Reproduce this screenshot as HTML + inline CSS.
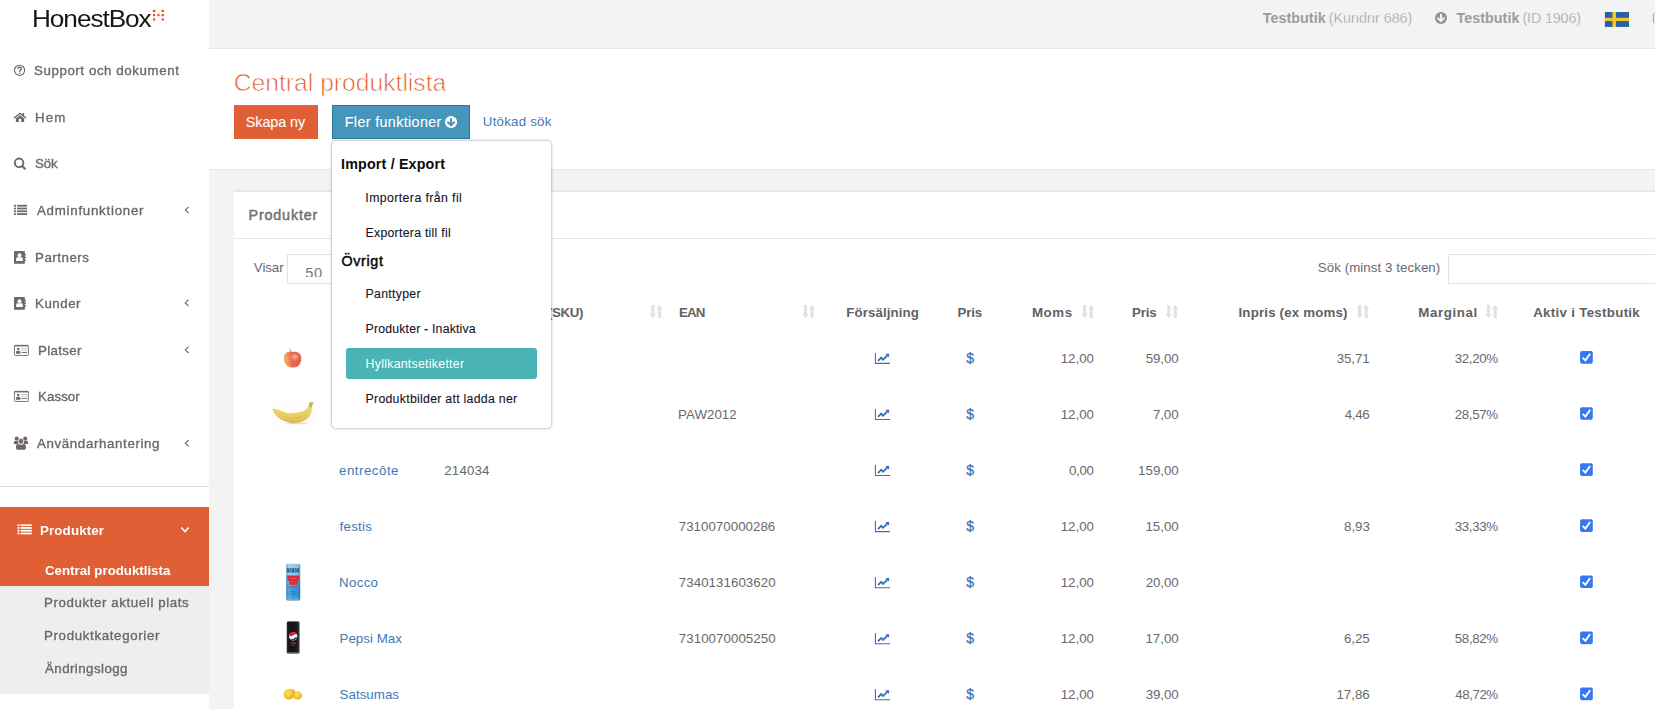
<!DOCTYPE html>
<html lang="sv"><head><meta charset="utf-8"><title>Central produktlista</title>
<style>
html,body{margin:0;padding:0}
body{width:1655px;height:709px;overflow:hidden;position:relative;background:#f3f3f4;font-family:"Liberation Sans",sans-serif;}
.t{position:absolute;z-index:2;white-space:nowrap;line-height:1;font-family:"Liberation Sans",sans-serif;}
.a{position:absolute;display:block}
svg{position:absolute;overflow:visible}

</style></head>
<body>
<!-- sidebar -->
<div class="a" style="left:0;top:0;width:209px;height:709px;background:#fff"></div>
<div class="a" style="left:0;top:486px;width:209px;height:1px;background:#dddddd"></div>
<div class="a" style="left:0;top:507px;width:209px;height:79px;background:#e05f35"></div>
<div class="a" style="left:0;top:586px;width:209px;height:108px;background:#eeeeee"></div>
<!-- navbar -->
<div class="a" style="left:209px;top:48px;width:1446px;height:1px;background:#e4e8eb"></div>
<!-- page heading -->
<div class="a" style="left:209px;top:49px;width:1446px;height:120px;background:#fff;border-bottom:1px solid #e4e8eb"></div>
<!-- ibox -->
<div class="a" style="left:234px;top:190px;width:1421px;height:519px;background:#fff;border-top:2px solid #e4e8eb;box-sizing:border-box"></div>
<div class="a" style="left:234px;top:238px;width:1421px;height:1px;background:#e4e8eb"></div>
<!-- buttons -->
<div class="a" style="left:234px;top:105px;width:84px;height:34px;background:#e05f35"></div>
<div class="a" style="left:332px;top:105px;width:138px;height:34px;background:#4496ba;border:1px solid #2f7799;box-sizing:border-box"></div>
<!-- select + search input -->
<div class="a" style="left:287px;top:254px;width:90px;height:30px;background:#fff;border:1px solid #e3e4e5;box-sizing:border-box"><div style="position:absolute;left:0;top:0;width:80px;height:22.3px;overflow:hidden"><span style="position:absolute;left:17.3px;top:10.5px;font-size:14.6px;line-height:1;color:#74777a;letter-spacing:.55px">50</span></div></div>
<div class="a" style="left:1448px;top:254px;width:260px;height:30px;background:#fff;border:1px solid #e3e4e5;box-sizing:border-box"></div>
<!-- dropdown -->
<div class="a" style="z-index:1;left:332px;top:140.8px;width:218.5px;height:286.8px;background:#fff;border-radius:4px;box-shadow:0 0 3px rgba(86,96,117,.7)"></div>
<div class="a" style="z-index:1;left:346px;top:348px;width:191px;height:31px;background:#49b3b6;border-radius:3px"></div>
<svg width="1655" height="709" viewBox="0 0 1655 709" style="left:0;top:0">
<defs>
<radialGradient id="ap" cx="0.62" cy="0.32" r="0.75"><stop offset="0" stop-color="#f6b9aa"/><stop offset="0.35" stop-color="#e8604f"/><stop offset="0.75" stop-color="#e4614a"/><stop offset="1" stop-color="#ef9f60"/></radialGradient>
<linearGradient id="ap2" x1="0" x2="1" y1="0" y2="0"><stop offset="0" stop-color="#f3b25a" stop-opacity=".95"/><stop offset="0.35" stop-color="#f0a050" stop-opacity=".35"/><stop offset="0.6" stop-color="#e8553f" stop-opacity="0"/></linearGradient>
<linearGradient id="bn" x1="0" x2="0" y1="0" y2="1"><stop offset="0" stop-color="#f3e08c"/><stop offset="0.5" stop-color="#ecd16a"/><stop offset="0.85" stop-color="#e3c455"/><stop offset="1" stop-color="#cdb046"/></linearGradient>
<linearGradient id="bs" x1="0" x2="0" y1="0" y2="1"><stop offset="0" stop-color="#cfc191"/><stop offset="0.45" stop-color="#a9b343"/><stop offset="1" stop-color="#d3c653"/></linearGradient>
<linearGradient id="nc" x1="0" x2="0" y1="0" y2="1"><stop offset="0" stop-color="#8fcff0"/><stop offset="0.3" stop-color="#86c9ee"/><stop offset="0.5" stop-color="#4aa4de"/><stop offset="0.8" stop-color="#2f8fd6"/><stop offset="1" stop-color="#4fa8df"/></linearGradient>
<linearGradient id="ncs" x1="0" x2="1" y1="0" y2="0"><stop offset="0" stop-color="#0d3f78" stop-opacity=".35"/><stop offset="0.2" stop-color="#fff" stop-opacity=".15"/><stop offset="0.5" stop-color="#fff" stop-opacity="0"/><stop offset="0.85" stop-color="#0d3f78" stop-opacity=".1"/><stop offset="1" stop-color="#0d3f78" stop-opacity=".4"/></linearGradient>
<linearGradient id="pp" x1="0" x2="1" y1="0" y2="0"><stop offset="0" stop-color="#3a3a3c"/><stop offset="0.18" stop-color="#141416"/><stop offset="0.8" stop-color="#1a1a1c"/><stop offset="1" stop-color="#4a4a4d"/></linearGradient>
<radialGradient id="st" cx="0.4" cy="0.35" r="0.7"><stop offset="0" stop-color="#fbe05a"/><stop offset="0.6" stop-color="#f3c934"/><stop offset="1" stop-color="#dba520"/></radialGradient>
<filter id="b1" x="-20%" y="-20%" width="140%" height="140%"><feGaussianBlur stdDeviation="0.35"/></filter>
<filter id="b2" x="-20%" y="-20%" width="140%" height="140%"><feGaussianBlur stdDeviation="0.6"/></filter>
</defs>
<g filter="url(#b1)"><path d="M292.3 352.3 C289 350.8 284.3 352.6 284.2 358 C284.1 363.2 287.6 367.4 291 367.5 C292.3 367.5 293.2 367.5 294.6 367.5 C298 367.4 301.3 363.6 301.3 358.2 C301.3 353 296.6 350.8 292.3 352.3 Z" fill="url(#ap)"/><path d="M292.3 352.3 C289 350.8 284.3 352.6 284.2 358 C284.1 363.2 287.6 367.4 291 367.5 C292.3 367.5 293.2 367.5 294.6 367.5 C298 367.4 301.3 363.6 301.3 358.2 C301.3 353 296.6 350.8 292.3 352.3 Z" fill="url(#ap2)"/><path d="M287.2 354.5 L287.6 363.5" stroke="#f7cf7a" stroke-width="0.7" opacity="0.55"/><path d="M289.6 353.5 L290.2 366" stroke="#f7cf7a" stroke-width="0.7" opacity="0.35"/><path d="M286 356 L286 362" stroke="#f7cf7a" stroke-width="0.7" opacity="0.5"/><path d="M292.5 355 L293 366.5" stroke="#f7cf7a" stroke-width="0.7" opacity="0.25"/><path d="M295.4 358 L295.4 366" stroke="#f7cf7a" stroke-width="0.7" opacity="0.25"/><path d="M288.5 360 L289 366" stroke="#f7cf7a" stroke-width="0.7" opacity="0.4"/><path d="M291.6 352.3 Q291.2 350.3 289.5 349.2" fill="none" stroke="#8a5c38" stroke-width="0.8"/></g>
<rect x="270.2" y="398" width="45.6" height="32.4" fill="#fdfdfc"/><ellipse cx="297" cy="423.4" rx="11" ry="0.9" fill="#d9d3bd" opacity=".7" filter="url(#b2)"/><g filter="url(#b1)"><path d="M309.5 402.2 L313.7 402.3 Q312.2 404.3 311.8 407.2 Q312.6 413.5 307.8 418.6 Q301.5 423.4 292.8 423.2 Q283 422 276.7 416.5 Q273.6 413.4 273 410.6 Q273.6 408.6 276.7 409 Q282 411.6 287.4 413 Q295 414 303.5 411.1 Q307.6 408.8 308.6 406.6 Q309.4 404.5 309.5 402.2 Z" fill="url(#bn)"/><path d="M309.5 402.2 L313.7 402.3 Q312.2 404.3 311.8 407.4 Q310.4 407.6 308.4 406.9 Q309.4 404.5 309.5 402.2 Z" fill="url(#bs)"/><path d="M275 411.8 Q283 417.5 293.5 418 Q303 417.8 309 411.5" fill="none" stroke="#d9bd52" stroke-width="0.8" opacity=".7"/><path d="M273.1 410 Q273.2 409.2 274.2 409" stroke="#6d7a33" stroke-width="0.9" fill="none"/></g>
<g filter="url(#b1)"><rect x="286.3" y="563.9" width="13.9" height="36.5" rx="1.4" fill="url(#nc)"/><rect x="286.3" y="563.9" width="13.9" height="36.5" rx="1.4" fill="url(#ncs)"/><rect x="286.8" y="563.7" width="12.9" height="0.9" rx="0.4" fill="#b9c1c8"/><rect x="287" y="599.6" width="12.5" height="0.9" rx="0.4" fill="#9aa6b3"/><rect x="286.90" y="568.3" width="2.0" height="4.2" rx="0.5" fill="#1a4a86"/><rect x="287.60" y="569.4" width="0.6" height="2" fill="#7cc3ec"/><rect x="289.45" y="568.3" width="2.0" height="4.2" rx="0.5" fill="#1a4a86"/><rect x="290.15" y="569.4" width="0.6" height="2" fill="#7cc3ec"/><rect x="292.00" y="568.3" width="2.0" height="4.2" rx="0.5" fill="#1a4a86"/><rect x="292.70" y="569.4" width="0.6" height="2" fill="#7cc3ec"/><rect x="294.55" y="568.3" width="2.0" height="4.2" rx="0.5" fill="#1a4a86"/><rect x="295.25" y="569.4" width="0.6" height="2" fill="#7cc3ec"/><rect x="297.10" y="568.3" width="2.0" height="4.2" rx="0.5" fill="#1a4a86"/><rect x="297.80" y="569.4" width="0.6" height="2" fill="#7cc3ec"/><path d="M287.3 575.6 H299.4 V580.4 H298.2 L297.6 584.8 H289.6 L289 580.4 H287.3 Z" fill="#d92a35"/><rect x="289.5" y="578.3" width="8" height="0.6" fill="#f08c8c" opacity=".7"/><rect x="290.5" y="581.6" width="6" height="0.6" fill="#f08c8c" opacity=".6"/><rect x="288.2" y="586.6" width="10" height="0.8" fill="#d8232f" opacity=".9"/><rect x="290" y="591.2" width="6.6" height="0.7" fill="#d0304a" opacity=".75"/><rect x="291.2" y="593" width="4.4" height="0.7" fill="#d0304a" opacity=".7"/><rect x="291.8" y="594.8" width="3.2" height="0.7" fill="#d0304a" opacity=".65"/></g>
<g filter="url(#b1)"><rect x="286.7" y="621.4" width="12.9" height="32" rx="1.5" fill="url(#pp)"/><rect x="287.3" y="621.2" width="11.7" height="0.8" rx="0.4" fill="#77787b"/><rect x="287.5" y="652.6" width="11.3" height="0.9" rx="0.4" fill="#8a8b8e"/><circle cx="293.2" cy="636.4" r="4.15" fill="#f2f2f4"/><path d="M289.1 635.6 A4.15 4.15 0 0 1 296.9 634.2 Q294.5 634.1 292.6 635.6 Q290.8 636.9 289.1 635.6 Z" fill="#d82332"/><path d="M297.3 637 A4.15 4.15 0 0 1 289.8 638.8 Q292 639.6 294 638.2 Q295.8 636.8 297.3 637 Z" fill="#1e52a8"/><rect x="290.6" y="642.5" width="5.2" height="1.2" fill="#d82332"/><rect x="291" y="644.8" width="4.4" height="0.5" fill="#aaa" opacity=".6"/></g>
<g filter="url(#b1)"><ellipse cx="297.5" cy="695.4" rx="4.5" ry="4.2" fill="url(#st)"/><ellipse cx="291.2" cy="691.3" rx="3.8" ry="2.6" fill="url(#st)"/><ellipse cx="288.8" cy="694.2" rx="5.1" ry="5.3" fill="url(#st)"/><path d="M293 690.6 Q294.6 693.2 293.2 697.6" stroke="#c9941c" stroke-width="0.5" fill="none" opacity=".8"/></g>
</svg>
<svg width="1655" height="709" viewBox="0 0 1655 709" style="left:0;top:0">
<rect x="152.95" y="9.85" width="2.3" height="2.3" rx="0.4" fill="#e2561f"/><rect x="161.6" y="9.85" width="2.3" height="2.3" rx="0.4" fill="#e2561f"/><rect x="152.95" y="13.95" width="2.3" height="2.3" rx="0.4" fill="#e2561f"/><rect x="157.3" y="13.95" width="2.3" height="2.3" rx="0.4" fill="#e2561f"/><rect x="161.6" y="13.95" width="2.3" height="2.3" rx="0.4" fill="#e2561f"/><rect x="152.95" y="18.25" width="2.3" height="2.3" rx="0.4" fill="#e2561f"/><rect x="161.6" y="18.25" width="2.3" height="2.3" rx="0.4" fill="#e2561f"/>
<circle cx="19.55" cy="70.35" r="5.1" fill="none" stroke="#6e6763" stroke-width="1.15"/><path d="M17.8 68.75 c0 -1.9 3.5 -2.1 3.5 -0.1 c0 1.3 -1.7 1.4 -1.7 3" fill="none" stroke="#6e6763" stroke-width="1.4"/><rect x="18.95" y="72.65" width="1.3" height="1.3" fill="#6e6763"/>
<g transform="translate(13.85 112.8)" fill="#6e6763"><path d="M6.15 -0.3 L12.7 4.85 L11.75 6.0 L6.15 1.55 L0.55 6.0 L-0.4 4.85 Z"/><rect x="8.7" y="0.15" width="1.6" height="3.2"/><path d="M6.15 2.45 L10.3 5.75 V9.1 H7.35 V5.9 H4.95 V9.1 H2 V5.75 Z"/></g>
<circle cx="19.1" cy="162.85" r="4.3" fill="none" stroke="#6e6763" stroke-width="1.9"/><path d="M22.5 166.25 L24.9 168.65" stroke="#6e6763" stroke-width="2.1" stroke-linecap="round"/>
<rect x="13.9" y="204.85" width="2.1" height="1.75" fill="#6e6763"/><rect x="17" y="204.85" width="10.1" height="1.75" fill="#6e6763"/><rect x="13.9" y="207.62" width="2.1" height="1.75" fill="#6e6763"/><rect x="17" y="207.62" width="10.1" height="1.75" fill="#6e6763"/><rect x="13.9" y="210.39" width="2.1" height="1.75" fill="#6e6763"/><rect x="17" y="210.39" width="10.1" height="1.75" fill="#6e6763"/><rect x="13.9" y="213.16" width="2.1" height="1.75" fill="#6e6763"/><rect x="17" y="213.16" width="10.1" height="1.75" fill="#6e6763"/>
<g transform="translate(14 251.1)"><rect x="0" y="0" width="10.9" height="12.7" rx="0.9" fill="#6e6763"/><rect x="10.9" y="2.9" width="1.1" height="1.4" fill="#6e6763"/><rect x="10.9" y="5.6" width="1.1" height="1.4" fill="#6e6763"/><rect x="10.9" y="8.3" width="1.1" height="1.4" fill="#6e6763"/><circle cx="5.5" cy="4.2" r="1.95" fill="#fff"/><path d="M2.1 9.9 V8.1 Q2.1 6 4 5.9 Q5.5 7 7 5.9 Q8.9 6 8.9 8.1 V9.9 Z" fill="#fff"/></g>
<g transform="translate(14 297.1)"><rect x="0" y="0" width="10.9" height="12.7" rx="0.9" fill="#6e6763"/><rect x="10.9" y="2.9" width="1.1" height="1.4" fill="#6e6763"/><rect x="10.9" y="5.6" width="1.1" height="1.4" fill="#6e6763"/><rect x="10.9" y="8.3" width="1.1" height="1.4" fill="#6e6763"/><circle cx="5.5" cy="4.2" r="1.95" fill="#fff"/><path d="M2.1 9.9 V8.1 Q2.1 6 4 5.9 Q5.5 7 7 5.9 Q8.9 6 8.9 8.1 V9.9 Z" fill="#fff"/></g>
<g transform="translate(14 344.9)"><rect x="0.45" y="0.45" width="13.9" height="10.1" rx="0.8" fill="none" stroke="#6e6763" stroke-width="0.9"/><rect x="0.4" y="0.2" width="14" height="1.3" fill="#6e6763"/><circle cx="4.2" cy="4.1" r="1.25" fill="#6e6763"/><path d="M2 8.8 V7.4 Q2 6 3.2 5.9 Q4.2 6.6 5.2 5.9 Q6.4 6 6.4 7.4 V8.8 Z" fill="#6e6763"/><rect x="7.5" y="3.3" width="5.5" height="0.75" fill="#6e6763" opacity=".55"/><rect x="7.5" y="5.1" width="2.2" height="0.75" fill="#6e6763" opacity=".5"/><rect x="10.6" y="5.1" width="2.4" height="0.75" fill="#6e6763" opacity=".5"/><rect x="7.5" y="7.1" width="5.5" height="0.9" fill="#6e6763"/></g>
<g transform="translate(14 390.9)"><rect x="0.45" y="0.45" width="13.9" height="10.1" rx="0.8" fill="none" stroke="#6e6763" stroke-width="0.9"/><rect x="0.4" y="0.2" width="14" height="1.3" fill="#6e6763"/><circle cx="4.2" cy="4.1" r="1.25" fill="#6e6763"/><path d="M2 8.8 V7.4 Q2 6 3.2 5.9 Q4.2 6.6 5.2 5.9 Q6.4 6 6.4 7.4 V8.8 Z" fill="#6e6763"/><rect x="7.5" y="3.3" width="5.5" height="0.75" fill="#6e6763" opacity=".55"/><rect x="7.5" y="5.1" width="2.2" height="0.75" fill="#6e6763" opacity=".5"/><rect x="10.6" y="5.1" width="2.4" height="0.75" fill="#6e6763" opacity=".5"/><rect x="7.5" y="7.1" width="5.5" height="0.9" fill="#6e6763"/></g>
<g transform="translate(13.9 436.8)" fill="#6e6763"><circle cx="2.8" cy="1.85" r="2.05"/><circle cx="11.3" cy="1.85" r="2.05"/><path d="M0 7.3 V5.3 Q0 4.1 1.3 4.1 H4.2 Q3.6 5.8 4.6 7.3 Z"/><path d="M14.1 7.3 V5.3 Q14.1 4.1 12.8 4.1 H9.9 Q10.5 5.8 9.5 7.3 Z"/><ellipse cx="7.05" cy="4.45" rx="2.5" ry="2.75" stroke="#fff" stroke-width="0.4"/><path d="M2.1 11.3 V9.3 Q2.1 7.4 4.3 7.3 Q7.05 8.7 9.8 7.3 Q12 7.4 12 9.3 V11.3 Q12 13 10.3 13 H3.8 Q2.1 13 2.1 11.3 Z"/></g>
<path d="M188.6 206.8 L185.3 210 L188.6 213.2" fill="none" stroke="#6e6763" stroke-width="1.15"/><path d="M188.6 299.7 L185.3 302.9 L188.6 306.1" fill="none" stroke="#6e6763" stroke-width="1.15"/><path d="M188.6 346.6 L185.3 349.8 L188.6 353" fill="none" stroke="#6e6763" stroke-width="1.15"/><path d="M188.6 440 L185.3 443.2 L188.6 446.4" fill="none" stroke="#6e6763" stroke-width="1.15"/>
<rect x="17.4" y="524.3" width="2.1" height="1.75" fill="#fff"/><rect x="20.5" y="524.3" width="11.3" height="1.75" fill="#fff"/><rect x="17.4" y="527.07" width="2.1" height="1.75" fill="#fff"/><rect x="20.5" y="527.07" width="11.3" height="1.75" fill="#fff"/><rect x="17.4" y="529.84" width="2.1" height="1.75" fill="#fff"/><rect x="20.5" y="529.84" width="11.3" height="1.75" fill="#fff"/><rect x="17.4" y="532.61" width="2.1" height="1.75" fill="#fff"/><rect x="20.5" y="532.61" width="11.3" height="1.75" fill="#fff"/>
<path d="M181.3 527.6 L185 531.6 L188.7 527.6" fill="none" stroke="#fff" stroke-width="1.5"/>
<circle cx="1441" cy="17.9" r="6" fill="#8f9193"/><path d="M1441 14 V20.4 M1437.4 17.6 L1441 21.2 L1444.6 17.6" fill="none" stroke="#f3f3f4" stroke-width="2"/>
<circle cx="451.05" cy="122.05" r="6.1" fill="#fff"/><path d="M451.05 118.15 V124.55 M447.45 121.75 L451.05 125.35 L454.65 121.75" fill="none" stroke="#4496ba" stroke-width="2"/>
<rect x="1604.9" y="12.05" width="24.1" height="14.9" fill="#2761a3"/><rect x="1612.4" y="12.05" width="3.6" height="15" fill="#f3c62c"/><rect x="1604.9" y="17.85" width="24.2" height="3.2" fill="#f3c62c"/>
<rect x="1653.4" y="13.3" width="4" height="9.4" rx="1.2" fill="#dff0f7" stroke="#9a9c9e" stroke-width="0.9"/>
<g transform="translate(649.7 304.7)" fill="#e1e2e2"><path d="M1.6 0.2 H4.8 V9.2 H6.5 L3.2 13.6 L-0.1 9.2 H1.6 Z"/><path d="M9.8 0.1 L13.1 4.1 H11.4 V13.4 H8.2 V4.1 H6.5 Z"/></g><g transform="translate(802.3 304.7)" fill="#e1e2e2"><path d="M1.6 0.2 H4.8 V9.2 H6.5 L3.2 13.6 L-0.1 9.2 H1.6 Z"/><path d="M9.8 0.1 L13.1 4.1 H11.4 V13.4 H8.2 V4.1 H6.5 Z"/></g><g transform="translate(1081.4 304.7)" fill="#e1e2e2"><path d="M1.6 0.2 H4.8 V9.2 H6.5 L3.2 13.6 L-0.1 9.2 H1.6 Z"/><path d="M9.8 0.1 L13.1 4.1 H11.4 V13.4 H8.2 V4.1 H6.5 Z"/></g><g transform="translate(1165.5 304.7)" fill="#e1e2e2"><path d="M1.6 0.2 H4.8 V9.2 H6.5 L3.2 13.6 L-0.1 9.2 H1.6 Z"/><path d="M9.8 0.1 L13.1 4.1 H11.4 V13.4 H8.2 V4.1 H6.5 Z"/></g><g transform="translate(1356.4 304.7)" fill="#e1e2e2"><path d="M1.6 0.2 H4.8 V9.2 H6.5 L3.2 13.6 L-0.1 9.2 H1.6 Z"/><path d="M9.8 0.1 L13.1 4.1 H11.4 V13.4 H8.2 V4.1 H6.5 Z"/></g><g transform="translate(1485.3 304.7)" fill="#e1e2e2"><path d="M1.6 0.2 H4.8 V9.2 H6.5 L3.2 13.6 L-0.1 9.2 H1.6 Z"/><path d="M9.8 0.1 L13.1 4.1 H11.4 V13.4 H8.2 V4.1 H6.5 Z"/></g>
<g transform="translate(874.8 352.9)"><path d="M0.6 0 V10.5 H15.2" fill="none" stroke="#3a6db6" stroke-width="1.1"/><path d="M3.2 8 L6.4 4.7 L8.3 6.7 L12.6 2.4" fill="none" stroke="#3a6db6" stroke-width="1.8"/><path d="M10.6 0.9 H14.3 V4.6 Z" fill="#3a6db6"/></g><rect x="1580.1" y="351.1" width="12.7" height="12.7" rx="1.8" fill="#3478f6"/><path d="M1582.7 357.8 L1585.4 360.4 L1590.1 353.8" fill="none" stroke="#fff" stroke-width="1.9"/>
<g transform="translate(874.8 408.97)"><path d="M0.6 0 V10.5 H15.2" fill="none" stroke="#3a6db6" stroke-width="1.1"/><path d="M3.2 8 L6.4 4.7 L8.3 6.7 L12.6 2.4" fill="none" stroke="#3a6db6" stroke-width="1.8"/><path d="M10.6 0.9 H14.3 V4.6 Z" fill="#3a6db6"/></g><rect x="1580.1" y="407.17" width="12.7" height="12.7" rx="1.8" fill="#3478f6"/><path d="M1582.7 413.87 L1585.4 416.47 L1590.1 409.87" fill="none" stroke="#fff" stroke-width="1.9"/>
<g transform="translate(874.8 465.04)"><path d="M0.6 0 V10.5 H15.2" fill="none" stroke="#3a6db6" stroke-width="1.1"/><path d="M3.2 8 L6.4 4.7 L8.3 6.7 L12.6 2.4" fill="none" stroke="#3a6db6" stroke-width="1.8"/><path d="M10.6 0.9 H14.3 V4.6 Z" fill="#3a6db6"/></g><rect x="1580.1" y="463.24" width="12.7" height="12.7" rx="1.8" fill="#3478f6"/><path d="M1582.7 469.94 L1585.4 472.54 L1590.1 465.94" fill="none" stroke="#fff" stroke-width="1.9"/>
<g transform="translate(874.8 521.11)"><path d="M0.6 0 V10.5 H15.2" fill="none" stroke="#3a6db6" stroke-width="1.1"/><path d="M3.2 8 L6.4 4.7 L8.3 6.7 L12.6 2.4" fill="none" stroke="#3a6db6" stroke-width="1.8"/><path d="M10.6 0.9 H14.3 V4.6 Z" fill="#3a6db6"/></g><rect x="1580.1" y="519.31" width="12.7" height="12.7" rx="1.8" fill="#3478f6"/><path d="M1582.7 526.01 L1585.4 528.61 L1590.1 522.01" fill="none" stroke="#fff" stroke-width="1.9"/>
<g transform="translate(874.8 577.18)"><path d="M0.6 0 V10.5 H15.2" fill="none" stroke="#3a6db6" stroke-width="1.1"/><path d="M3.2 8 L6.4 4.7 L8.3 6.7 L12.6 2.4" fill="none" stroke="#3a6db6" stroke-width="1.8"/><path d="M10.6 0.9 H14.3 V4.6 Z" fill="#3a6db6"/></g><rect x="1580.1" y="575.38" width="12.7" height="12.7" rx="1.8" fill="#3478f6"/><path d="M1582.7 582.08 L1585.4 584.68 L1590.1 578.08" fill="none" stroke="#fff" stroke-width="1.9"/>
<g transform="translate(874.8 633.25)"><path d="M0.6 0 V10.5 H15.2" fill="none" stroke="#3a6db6" stroke-width="1.1"/><path d="M3.2 8 L6.4 4.7 L8.3 6.7 L12.6 2.4" fill="none" stroke="#3a6db6" stroke-width="1.8"/><path d="M10.6 0.9 H14.3 V4.6 Z" fill="#3a6db6"/></g><rect x="1580.1" y="631.45" width="12.7" height="12.7" rx="1.8" fill="#3478f6"/><path d="M1582.7 638.15 L1585.4 640.75 L1590.1 634.15" fill="none" stroke="#fff" stroke-width="1.9"/>
<g transform="translate(874.8 689.32)"><path d="M0.6 0 V10.5 H15.2" fill="none" stroke="#3a6db6" stroke-width="1.1"/><path d="M3.2 8 L6.4 4.7 L8.3 6.7 L12.6 2.4" fill="none" stroke="#3a6db6" stroke-width="1.8"/><path d="M10.6 0.9 H14.3 V4.6 Z" fill="#3a6db6"/></g><rect x="1580.1" y="687.52" width="12.7" height="12.7" rx="1.8" fill="#3478f6"/><path d="M1582.7 694.22 L1585.4 696.82 L1590.1 690.22" fill="none" stroke="#fff" stroke-width="1.9"/>
</svg>

<!-- text layer -->
<span id="logo" class="t" style="left:31.57px;top:7.00px;font-size:23.8px;font-weight:400;color:#161616;letter-spacing:-0.949px;transform-origin:0 0;transform:scaleX(1.1);">HonestBox</span>
<span id="sb0" class="t" style="left:33.70px;top:64.00px;font-size:13.3px;font-weight:400;color:#6e6763;letter-spacing:0.581px;-webkit-text-stroke:0.35px currentColor;will-change:transform;">Support och dokument</span>
<span id="sb1" class="t" style="left:34.64px;top:111.00px;font-size:13.3px;font-weight:400;color:#6e6763;letter-spacing:1.156px;-webkit-text-stroke:0.35px currentColor;will-change:transform;">Hem</span>
<span id="sb2" class="t" style="left:34.74px;top:157.00px;font-size:13.3px;font-weight:400;color:#6e6763;letter-spacing:-0.176px;-webkit-text-stroke:0.35px currentColor;will-change:transform;">Sök</span>
<span id="sb3" class="t" style="left:36.72px;top:204.00px;font-size:13.3px;font-weight:400;color:#6e6763;letter-spacing:0.742px;-webkit-text-stroke:0.35px currentColor;will-change:transform;">Adminfunktioner</span>
<span id="sb4" class="t" style="left:35.12px;top:251.00px;font-size:13.3px;font-weight:400;color:#6e6763;letter-spacing:0.532px;-webkit-text-stroke:0.35px currentColor;will-change:transform;">Partners</span>
<span id="sb5" class="t" style="left:34.56px;top:297.00px;font-size:13.3px;font-weight:400;color:#6e6763;letter-spacing:0.529px;-webkit-text-stroke:0.35px currentColor;will-change:transform;">Kunder</span>
<span id="sb6" class="t" style="left:38.00px;top:344.00px;font-size:13.3px;font-weight:400;color:#6e6763;letter-spacing:0.325px;-webkit-text-stroke:0.35px currentColor;will-change:transform;">Platser</span>
<span id="sb7" class="t" style="left:37.80px;top:390.00px;font-size:13.3px;font-weight:400;color:#6e6763;letter-spacing:0.073px;-webkit-text-stroke:0.35px currentColor;will-change:transform;">Kassor</span>
<span id="sb8" class="t" style="left:37.17px;top:437.00px;font-size:13.3px;font-weight:400;color:#6e6763;letter-spacing:0.634px;-webkit-text-stroke:0.35px currentColor;will-change:transform;">Användarhantering</span>
<span id="prod" class="t" style="left:39.61px;top:524.00px;font-size:13.3px;font-weight:700;color:#fff;letter-spacing:0.148px;will-change:transform;">Produkter</span>
<span id="sub0" class="t" style="left:45.08px;top:564.00px;font-size:13.3px;font-weight:700;color:#fff;letter-spacing:-0.017px;will-change:transform;">Central produktlista</span>
<span id="sub1" class="t" style="left:44.26px;top:596.00px;font-size:13.3px;font-weight:400;color:#6e6763;letter-spacing:0.598px;-webkit-text-stroke:0.35px currentColor;will-change:transform;">Produkter aktuell plats</span>
<span id="sub2" class="t" style="left:44.27px;top:629.00px;font-size:13.3px;font-weight:400;color:#6e6763;letter-spacing:0.654px;-webkit-text-stroke:0.35px currentColor;will-change:transform;">Produktkategorier</span>
<span id="sub3" class="t" style="left:44.64px;top:662.00px;font-size:13.3px;font-weight:400;color:#6e6763;letter-spacing:0.442px;-webkit-text-stroke:0.35px currentColor;will-change:transform;">Ändringslogg</span>
<span id="nv0" class="t" style="left:1262.83px;top:11.00px;font-size:14.3px;font-weight:700;color:#9a9c9e;letter-spacing:0.035px;">Testbutik</span>
<span id="nv1" class="t" style="left:1328.65px;top:11.00px;font-size:14.3px;font-weight:400;color:#9c9ea0;letter-spacing:0.024px;-webkit-text-stroke:0.3px #f3f3f4;">(Kundnr 686)</span>
<span id="nv2" class="t" style="left:1456.40px;top:11.00px;font-size:14.3px;font-weight:700;color:#9a9c9e;letter-spacing:0.067px;">Testbutik</span>
<span id="nv3" class="t" style="left:1522.44px;top:11.00px;font-size:14.3px;font-weight:400;color:#9c9ea0;letter-spacing:-0.125px;-webkit-text-stroke:0.3px #f3f3f4;">(ID 1906)</span>
<span id="h2" class="t" style="left:233.82px;top:71.00px;font-size:24.6px;font-weight:400;color:#de5829;letter-spacing:0.028px;-webkit-text-stroke:0.7px #fff;">Central produktlista</span>
<span id="b1" class="t" style="left:245.79px;top:115.00px;font-size:14.3px;font-weight:400;color:#fff;letter-spacing:-0.031px;-webkit-text-stroke:0.1px #fff;">Skapa ny</span>
<span id="b2" class="t" style="left:344.74px;top:115.00px;font-size:14.3px;font-weight:400;color:#fff;letter-spacing:0.370px;-webkit-text-stroke:0.1px #fff;">Fler funktioner</span>
<span id="lk" class="t" style="left:482.81px;top:115.00px;font-size:13.3px;font-weight:400;color:#3f79b8;letter-spacing:0.230px;">Utökad sök</span>
<span id="d0" class="t" style="left:341.09px;top:157.00px;font-size:14.3px;font-weight:700;color:#0b0b0b;letter-spacing:0.161px;">Import / Export</span>
<span id="d1" class="t" style="left:365.31px;top:192.00px;font-size:12.3px;font-weight:400;color:#15131f;letter-spacing:0.412px;-webkit-text-stroke:0.1px currentColor;">Importera från fil</span>
<span id="d2" class="t" style="left:365.53px;top:227.00px;font-size:12.3px;font-weight:400;color:#15131f;letter-spacing:0.269px;-webkit-text-stroke:0.1px currentColor;">Exportera till fil</span>
<span id="d3" class="t" style="left:341.38px;top:254.00px;font-size:14.3px;font-weight:400;color:#0b0b0b;letter-spacing:0.682px;-webkit-text-stroke:0.5px currentColor;">Övrigt</span>
<span id="d4" class="t" style="left:365.53px;top:288.00px;font-size:12.3px;font-weight:400;color:#15131f;letter-spacing:0.294px;-webkit-text-stroke:0.1px currentColor;">Panttyper</span>
<span id="d5" class="t" style="left:365.53px;top:323.00px;font-size:12.3px;font-weight:400;color:#15131f;letter-spacing:0.187px;-webkit-text-stroke:0.1px currentColor;">Produkter - Inaktiva</span>
<span id="d6" class="t" style="left:365.58px;top:358.00px;font-size:12.3px;font-weight:400;color:#fff;letter-spacing:0.282px;">Hyllkantsetiketter</span>
<span id="d7" class="t" style="left:365.53px;top:393.00px;font-size:12.3px;font-weight:400;color:#15131f;letter-spacing:0.283px;-webkit-text-stroke:0.1px currentColor;">Produktbilder att ladda ner</span>
<span id="ib" class="t" style="left:248.51px;top:208.00px;font-size:14.3px;font-weight:400;color:#6d7072;letter-spacing:0.853px;-webkit-text-stroke:0.45px currentColor;">Produkter</span>
<span id="vis" class="t" style="left:253.82px;top:261.00px;font-size:13.3px;font-weight:400;color:#676a6c;letter-spacing:-0.058px;">Visar</span>
<span id="sok" class="t" style="left:1317.79px;top:261.00px;font-size:13.3px;font-weight:400;color:#676a6c;letter-spacing:0.067px;">Sök (minst 3 tecken)</span>
<span id="th0" class="t" style="left:548.06px;top:306.00px;font-size:13.3px;font-weight:700;color:#5f6264;letter-spacing:-0.405px;z-index:0;">(SKU)</span>
<span id="th1" class="t" style="left:678.93px;top:306.00px;font-size:13.3px;font-weight:700;color:#5f6264;letter-spacing:-0.804px;">EAN</span>
<span id="th2" class="t" style="left:846.35px;top:306.00px;font-size:13.3px;font-weight:700;color:#5f6264;letter-spacing:0.093px;">Försäljning</span>
<span id="th3" class="t" style="left:957.39px;top:306.00px;font-size:13.3px;font-weight:700;color:#5f6264;letter-spacing:-0.109px;">Pris</span>
<span id="th4" class="t" style="left:1031.88px;top:306.00px;font-size:13.3px;font-weight:700;color:#5f6264;letter-spacing:0.625px;">Moms</span>
<span id="th5" class="t" style="left:1132.06px;top:306.00px;font-size:13.3px;font-weight:700;color:#5f6264;letter-spacing:-0.202px;">Pris</span>
<span id="th6" class="t" style="left:1238.48px;top:306.00px;font-size:13.3px;font-weight:700;color:#5f6264;letter-spacing:0.177px;">Inpris (ex moms)</span>
<span id="th7" class="t" style="left:1418.32px;top:306.00px;font-size:13.3px;font-weight:700;color:#5f6264;letter-spacing:0.592px;">Marginal</span>
<span id="th8" class="t" style="left:1533.13px;top:306.00px;font-size:13.3px;font-weight:700;color:#5f6264;letter-spacing:0.308px;">Aktiv i Testbutik</span>
<span id="moms0" class="t" style="left:1060.67px;top:352.00px;font-size:13.3px;font-weight:400;color:#676a6c;letter-spacing:0.011px;">12,00</span>
<span id="pris0" class="t" style="left:1145.77px;top:352.00px;font-size:13.3px;font-weight:400;color:#676a6c;letter-spacing:-0.105px;">59,00</span>
<span id="inp0" class="t" style="left:1336.71px;top:352.00px;font-size:13.3px;font-weight:400;color:#676a6c;letter-spacing:-0.080px;">35,71</span>
<span id="mar0" class="t" style="left:1454.71px;top:352.00px;font-size:13.3px;font-weight:400;color:#676a6c;letter-spacing:-0.322px;">32,20%</span>
<span id="e1" class="t" style="left:678.08px;top:408.00px;font-size:13.3px;font-weight:400;color:#676a6c;letter-spacing:0.031px;">PAW2012</span>
<span id="moms1" class="t" style="left:1060.67px;top:408.00px;font-size:13.3px;font-weight:400;color:#676a6c;letter-spacing:0.011px;">12,00</span>
<span id="pris1" class="t" style="left:1152.97px;top:408.00px;font-size:13.3px;font-weight:400;color:#676a6c;letter-spacing:-0.100px;">7,00</span>
<span id="inp1" class="t" style="left:1344.72px;top:408.00px;font-size:13.3px;font-weight:400;color:#676a6c;letter-spacing:-0.339px;">4,46</span>
<span id="mar1" class="t" style="left:1454.74px;top:408.00px;font-size:13.3px;font-weight:400;color:#676a6c;letter-spacing:-0.328px;">28,57%</span>
<span id="n2" class="t" style="left:338.99px;top:464.00px;font-size:13.3px;font-weight:400;color:#3f79b8;letter-spacing:0.507px;">entrecôte</span>
<span id="s2" class="t" style="left:444.27px;top:464.00px;font-size:13.3px;font-weight:400;color:#676a6c;letter-spacing:0.172px;">214034</span>
<span id="moms2" class="t" style="left:1068.89px;top:464.00px;font-size:13.3px;font-weight:400;color:#676a6c;letter-spacing:-0.248px;">0,00</span>
<span id="pris2" class="t" style="left:1138.11px;top:464.00px;font-size:13.3px;font-weight:400;color:#676a6c;letter-spacing:-0.010px;">159,00</span>
<span id="n3" class="t" style="left:339.60px;top:520.00px;font-size:13.3px;font-weight:400;color:#3f79b8;letter-spacing:0.242px;">festis</span>
<span id="e3" class="t" style="left:678.73px;top:520.00px;font-size:13.3px;font-weight:400;color:#676a6c;letter-spacing:0.032px;">7310070000286</span>
<span id="moms3" class="t" style="left:1060.67px;top:520.00px;font-size:13.3px;font-weight:400;color:#676a6c;letter-spacing:0.011px;">12,00</span>
<span id="pris3" class="t" style="left:1145.49px;top:520.00px;font-size:13.3px;font-weight:400;color:#676a6c;letter-spacing:-0.012px;">15,00</span>
<span id="inp3" class="t" style="left:1344.12px;top:520.00px;font-size:13.3px;font-weight:400;color:#676a6c;letter-spacing:-0.066px;">8,93</span>
<span id="mar3" class="t" style="left:1454.71px;top:520.00px;font-size:13.3px;font-weight:400;color:#676a6c;letter-spacing:-0.322px;">33,33%</span>
<span id="n4" class="t" style="left:339.08px;top:576.00px;font-size:13.3px;font-weight:400;color:#3f79b8;letter-spacing:0.305px;">Nocco</span>
<span id="e4" class="t" style="left:678.82px;top:576.00px;font-size:13.3px;font-weight:400;color:#676a6c;letter-spacing:0.052px;">7340131603620</span>
<span id="moms4" class="t" style="left:1060.67px;top:576.00px;font-size:13.3px;font-weight:400;color:#676a6c;letter-spacing:0.011px;">12,00</span>
<span id="pris4" class="t" style="left:1145.74px;top:576.00px;font-size:13.3px;font-weight:400;color:#676a6c;letter-spacing:-0.075px;">20,00</span>
<span id="n5" class="t" style="left:339.48px;top:632.00px;font-size:13.3px;font-weight:400;color:#3f79b8;letter-spacing:0.045px;">Pepsi Max</span>
<span id="e5" class="t" style="left:678.82px;top:632.00px;font-size:13.3px;font-weight:400;color:#676a6c;letter-spacing:0.052px;">7310070005250</span>
<span id="moms5" class="t" style="left:1060.67px;top:632.00px;font-size:13.3px;font-weight:400;color:#676a6c;letter-spacing:0.011px;">12,00</span>
<span id="pris5" class="t" style="left:1145.49px;top:632.00px;font-size:13.3px;font-weight:400;color:#676a6c;letter-spacing:-0.012px;">17,00</span>
<span id="inp5" class="t" style="left:1343.91px;top:632.00px;font-size:13.3px;font-weight:400;color:#676a6c;letter-spacing:-0.008px;">6,25</span>
<span id="mar5" class="t" style="left:1454.77px;top:632.00px;font-size:13.3px;font-weight:400;color:#676a6c;letter-spacing:-0.334px;">58,82%</span>
<span id="n6" class="t" style="left:339.58px;top:688.00px;font-size:13.3px;font-weight:400;color:#3f79b8;letter-spacing:0.044px;">Satsumas</span>
<span id="moms6" class="t" style="left:1060.67px;top:688.00px;font-size:13.3px;font-weight:400;color:#676a6c;letter-spacing:0.011px;">12,00</span>
<span id="pris6" class="t" style="left:1145.71px;top:688.00px;font-size:13.3px;font-weight:400;color:#676a6c;letter-spacing:-0.068px;">39,00</span>
<span id="inp6" class="t" style="left:1336.49px;top:688.00px;font-size:13.3px;font-weight:400;color:#676a6c;letter-spacing:-0.017px;">17,86</span>
<span id="mar6" class="t" style="left:1455.28px;top:688.00px;font-size:13.3px;font-weight:400;color:#676a6c;letter-spacing:-0.436px;">48,72%</span>
<span id="dl0" class="t" style="left:966.23px;top:351.00px;font-size:14px;font-weight:400;color:#3a6db6;letter-spacing:0.000px;-webkit-text-stroke:0.25px currentColor;">$</span>
<span id="dl1" class="t" style="left:966.23px;top:407.00px;font-size:14px;font-weight:400;color:#3a6db6;letter-spacing:0.000px;-webkit-text-stroke:0.25px currentColor;">$</span>
<span id="dl2" class="t" style="left:966.23px;top:463.00px;font-size:14px;font-weight:400;color:#3a6db6;letter-spacing:0.000px;-webkit-text-stroke:0.25px currentColor;">$</span>
<span id="dl3" class="t" style="left:966.23px;top:519.00px;font-size:14px;font-weight:400;color:#3a6db6;letter-spacing:0.000px;-webkit-text-stroke:0.25px currentColor;">$</span>
<span id="dl4" class="t" style="left:966.23px;top:575.00px;font-size:14px;font-weight:400;color:#3a6db6;letter-spacing:0.000px;-webkit-text-stroke:0.25px currentColor;">$</span>
<span id="dl5" class="t" style="left:966.23px;top:631.00px;font-size:14px;font-weight:400;color:#3a6db6;letter-spacing:0.000px;-webkit-text-stroke:0.25px currentColor;">$</span>
<span id="dl6" class="t" style="left:966.23px;top:687.00px;font-size:14px;font-weight:400;color:#3a6db6;letter-spacing:0.000px;-webkit-text-stroke:0.25px currentColor;">$</span>
</body></html>
